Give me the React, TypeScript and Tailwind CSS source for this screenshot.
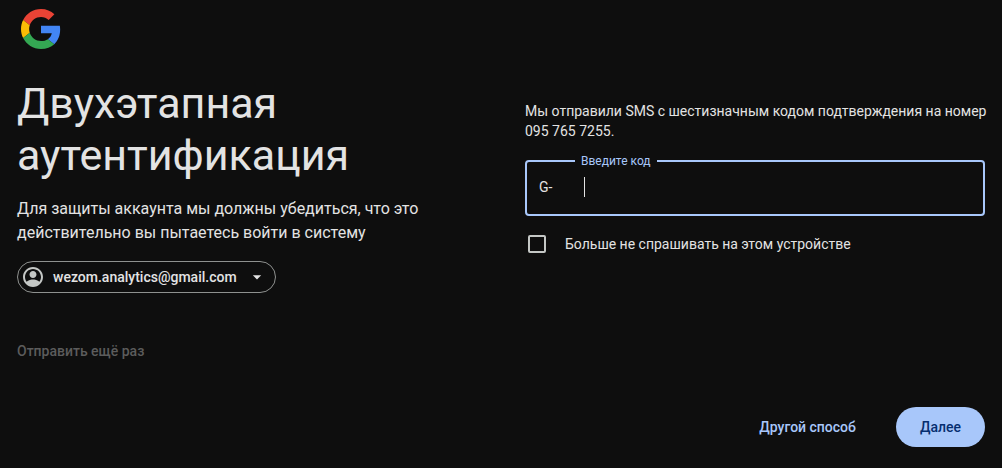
import { useState } from "react";

function GoogleLogo() {
  return (
    <svg viewBox="0 0 48 48" className="ml-1 size-10" role="img" aria-label="Google">
      <path
        fill="#EA4335"
        d="M24 9.5c3.54 0 6.71 1.22 9.21 3.6l6.85-6.85C35.9 2.38 30.47 0 24 0 14.62 0 6.51 5.38 2.56 13.22l7.98 6.19C12.43 13.72 17.74 9.5 24 9.5z"
      />
      <path
        fill="#4285F4"
        d="M46.98 24.55c0-1.57-.15-3.09-.38-4.55H24v9.02h12.94c-.58 2.96-2.26 5.48-4.78 7.18l7.73 6c4.51-4.18 7.09-10.36 7.09-17.65z"
      />
      <path
        fill="#FBBC05"
        d="M10.53 28.59c-.48-1.45-.76-2.99-.76-4.59s.27-3.14.76-4.59l-7.98-6.19C.92 16.46 0 20.12 0 24c0 3.88.92 7.54 2.56 10.78l7.97-6.19z"
      />
      <path
        fill="#34A853"
        d="M24 48c6.48 0 11.93-2.13 15.89-5.81l-7.73-6c-2.15 1.45-4.92 2.3-8.16 2.3-6.26 0-11.57-4.22-13.47-9.91l-7.98 6.19C6.51 42.62 14.62 48 24 48z"
      />
    </svg>
  );
}

function AccountChip({ email }: { email: string }) {
  return (
    <button
      type="button"
      className="flex h-8 items-center rounded-full border border-[#8e918f] pr-2 pl-[3px] text-sm font-medium">
      <svg viewBox="0 0 24 24" className="size-6 fill-[#c4c7c5]" aria-hidden="true">
        <path d="M12 2C6.48 2 2 6.48 2 12s4.48 10 10 10 10-4.48 10-10S17.52 2 12 2zm6.36 14.83c-1.43-1.74-4.9-2.33-6.36-2.33s-4.93.59-6.36 2.33C4.62 15.49 4 13.82 4 12c0-4.41 3.59-8 8-8s8 3.59 8 8c0 1.82-.62 3.49-1.64 4.83zM12 6c-1.94 0-3.5 1.56-3.5 3.5S10.06 13 12 13s3.5-1.56 3.5-3.5S13.94 6 12 6z" />
      </svg>
      <span className="ml-2">{email}</span>
      <svg viewBox="0 0 24 24" className="ml-2.5 size-5 fill-current" aria-hidden="true">
        <path d="M7 10l5 5 5-5z" />
      </svg>
    </button>
  );
}

function CodeField() {
  const [code, setCode] = useState("");

  return (
    <fieldset className="mt-3 h-[63px] rounded border-2 border-[#a8c7fa] px-3">
      <legend className="ml-9 px-1.5 text-xs text-[#a8c7fa]">
        <label htmlFor="code">Введите код</label>
      </legend>
      <div className="flex h-9 items-center text-sm">
        <span className="w-11">G-</span>
        {code === "" && <span className="ml-px h-5 w-px bg-[#e3e3e3]" />}
        <input
          id="code"
          type="tel"
          value={code}
          onChange={(e) => setCode(e.target.value)}
          className="min-w-0 flex-1 bg-transparent caret-transparent outline-none"
        />
      </div>
    </fieldset>
  );
}

export default function App() {
  return (
    <main className="min-h-screen bg-[#0e0e0e] px-[17px] pt-[9px] pb-5 font-[Roboto,'Noto_Sans',sans-serif] text-[#e3e3e3]">
      <GoogleLogo />

      <form onSubmit={(e) => e.preventDefault()}>
        <div className="grid grid-cols-2 gap-12 pt-7">
          <section>
            <h1 className="text-[43px] leading-[52px]">Двухэтапная аутентификация</h1>
            <p className="mt-4 mb-4 text-base">
              Для защиты аккаунта мы должны убедиться, что это действительно вы
              пытаетесь войти в систему
            </p>
            <AccountChip email="wezom.analytics@gmail.com" />
            <button
              type="button"
              disabled
              className="mt-12 block text-sm font-medium text-[#5c5c5c]">
              Отправить ещё раз
            </button>
          </section>

          <section className="pt-6">
            <p className="text-sm whitespace-nowrap">
              Мы отправили SMS с шестизначным кодом подтверждения на номер
              <br />
              095 765 7255.
            </p>
            <CodeField />
            <label className="mt-[18px] flex items-center text-sm">
              <input
                type="checkbox"
                className="mr-[19px] ml-[3px] size-[18px] appearance-none rounded-xs border-2 border-[#c4c7c5] checked:bg-[#a8c7fa]"
              />
              Больше не спрашивать на этом устройстве
            </label>
          </section>
        </div>

        <div className="mt-[46px] flex justify-end gap-6 text-sm font-medium">
          <button type="button" className="h-10 px-4 text-[#a8c7fa]">
            Другой способ
          </button>
          <button
            type="submit"
            className="h-10 rounded-full bg-[#a8c7fa] px-6 text-[#062e6f]">
            Далее
          </button>
        </div>
      </form>
    </main>
  );
}
